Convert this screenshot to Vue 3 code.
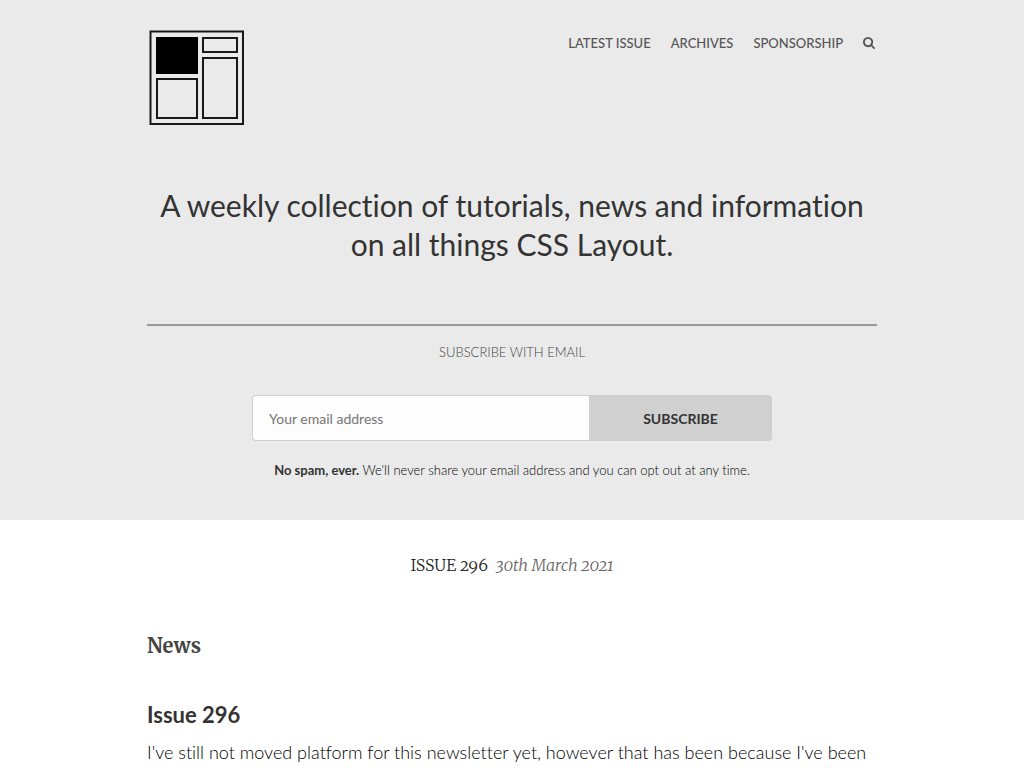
<script setup>
import { ref } from 'vue'

const email = ref('')
const links = ['Latest Issue', 'Archives', 'Sponsorship']
</script>

<template>
  <div class="page">
    <header class="hero">
      <div class="wrap">
        <div class="top">
          <a class="logo" href="#" aria-label="CSS Layout News">
            <svg viewBox="0 0 96 96" width="96" height="96" fill="none" stroke="#181818" stroke-width="2">
              <rect x="1.500" y="1.500" width="92.500" height="92.500" />
              <rect x="7" y="7" width="42" height="37" fill="#000" stroke="none" />
              <rect x="54" y="8" width="34" height="14" />
              <rect x="8" y="49" width="40" height="39" />
              <rect x="54" y="28" width="34" height="60" />
            </svg>
          </a>
          <nav class="nav">
            <a v-for="link in links" :key="link" href="#">{{ link }}</a>
            <a href="#" aria-label="Search">
              <svg class="search" viewBox="0 0 1664 1664" width="12" height="12">
                <path fill="currentColor" d="M1152 704q0-185-131.500-316.500T704 256 387.500 387.500 256 704t131.500 316.500T704 1152t316.500-131.500T1152 704zm512 832q0 52-38 90t-90 38q-54 0-90-38l-343-342q-179 124-399 124-143 0-273.500-55.500t-225-150-150-225T0 704t55.500-273.500 150-225 225-150T704 0t273.500 55.500 225 150 150 225T1408 704q0 220-124 399l343 343q37 37 37 90z" />
              </svg>
            </a>
          </nav>
        </div>
        <h1>A weekly collection of tutorials, news and information on all things CSS Layout.</h1>
        <section class="signup">
          <h2>Subscribe with email</h2>
          <form class="form" @submit.prevent>
            <input v-model="email" type="email" placeholder="Your email address" aria-label="Your email address" />
            <button type="submit">Subscribe</button>
          </form>
          <p class="note"><strong>No spam, ever.</strong> We'll never share your email address and you can opt out at any time.</p>
        </section>
      </div>
    </header>
    <main class="wrap">
      <h2 class="title">ISSUE 296 <time datetime="2021-03-30">30th March 2021</time></h2>
      <h3 class="category">News</h3>
      <article>
        <h4>Issue 296</h4>
        <p>I've still not moved platform for this newsletter yet, however that has been because I've been</p>
      </article>
    </main>
  </div>
</template>

<style>
body {
  margin: 0;
  overflow: hidden;
}
</style>

<style scoped>
.page {
  background: #fff;
  color: #333;
  font-family: Lato, sans-serif;
  font-variant-ligatures: none;
}
.wrap {
  box-sizing: border-box;
  max-width: 730px;
  margin: 0 auto;
}
.hero {
  background: #eaeaea;
  padding: 30px 0 40px;
}
.top {
  display: flex;
  justify-content: space-between;
  align-items: flex-start;
}
.logo {
  margin-left: 2px;
}
.logo svg {
  display: block;
}
.nav {
  display: flex;
  gap: 20px;
  padding: 4px 2px 0 0;
}
.nav a {
  color: #555;
  font-size: 13px;
  line-height: 18px;
  text-decoration: none;
  text-transform: uppercase;
  font-weight: 500;
}
.search {
  display: block;
  margin-top: 3px;
}
h1 {
  margin: 60px 0;
  font-size: 30px;
  line-height: 39px;
  font-weight: 400;
  text-align: center;
}
.signup {
  border-top: 2px solid #999;
  text-align: center;
}
.signup h2 {
  margin: 16px 0 33px;
  color: #444;
  font-size: 13px;
  line-height: 20px;
  font-weight: 300;
  text-transform: uppercase;
}
.form {
  display: flex;
  max-width: 520px;
  height: 46px;
  margin: 0 auto;
}
.form input {
  flex: 1;
  min-width: 0;
  box-sizing: border-box;
  margin: 0;
  padding: 0 16px;
  border: 1px solid #d0d0d0;
  border-right: 0;
  border-radius: 4px 0 0 4px;
  background: #fdfdfd;
  font: 14px Lato, sans-serif;
}
.form input::placeholder {
  color: #757575;
}
.form button {
  width: 183px;
  border: 0;
  border-radius: 0 4px 4px 0;
  background: #d0d0d0;
  color: #333;
  font: bold 14px Lato, sans-serif;
  text-transform: uppercase;
}
.note {
  margin: 19px 0 0;
  color: #000;
  font-size: 13px;
  line-height: 20px;
  font-weight: 300;
}
.note strong {
  color: #333;
  font-weight: 700;
}
.title {
  margin: 0;
  padding-top: 33px;
  font: 300 16px/24px Merriweather, "Liberation Serif", serif;
  font-variant-numeric: oldstyle-nums;
  color: #222;
  text-align: center;
}
.title time {
  margin-left: 4px;
  color: #666;
  font-style: italic;
}
.category {
  margin: 54px 0 0;
  color: #444;
  font: bold 20px/30px Merriweather, "Liberation Serif", serif;
}
h4 {
  margin: 39px 0 0;
  font-size: 22px;
  line-height: 30px;
}
article p {
  margin: 7px 0 0;
  color: #000;
  font-size: 18px;
  line-height: 30px;
  font-weight: 300;
}
</style>
